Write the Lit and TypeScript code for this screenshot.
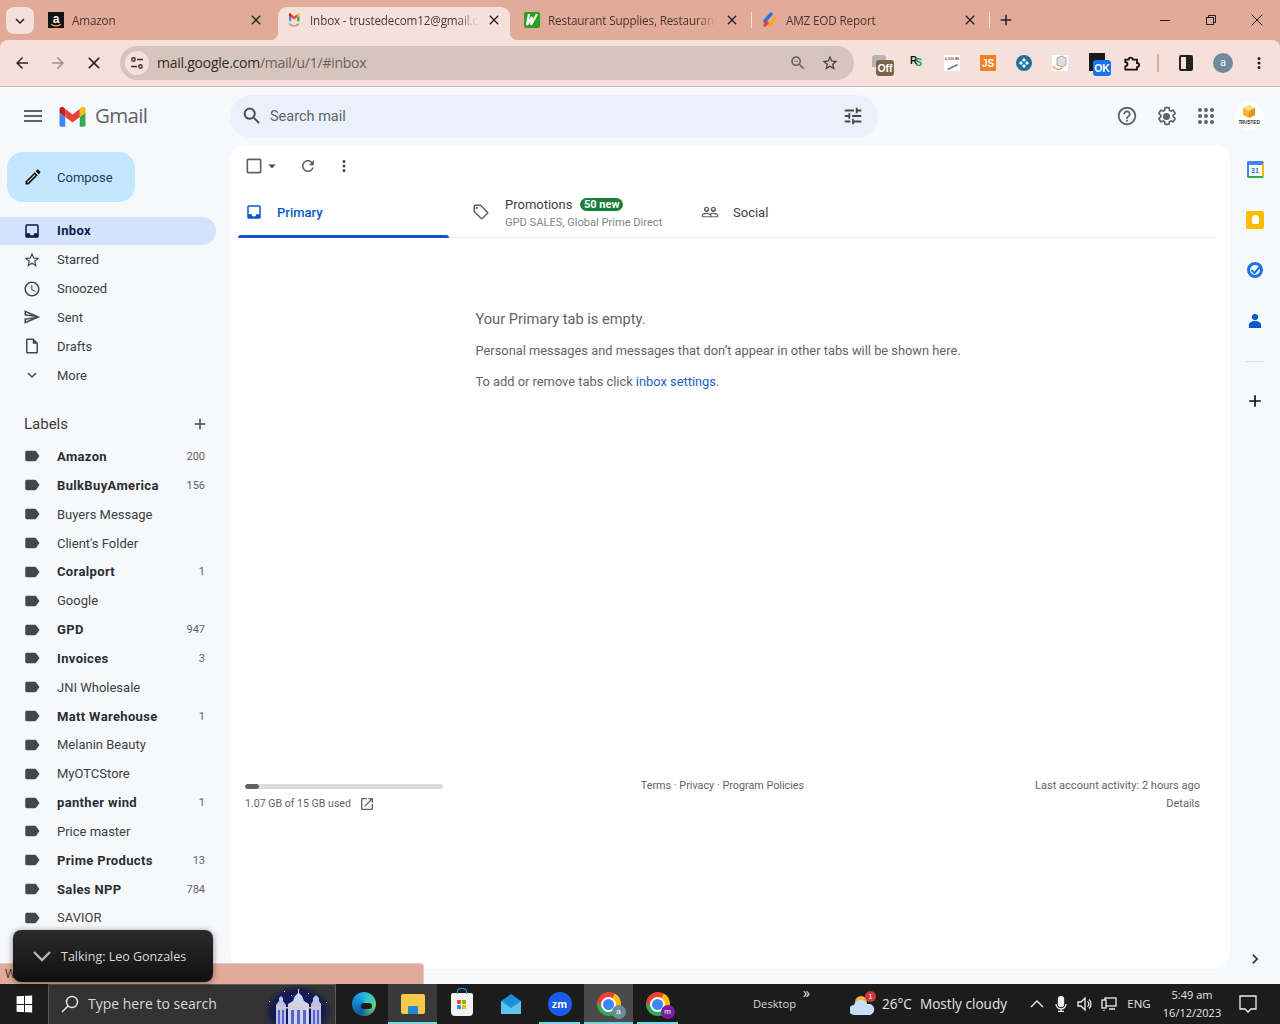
import { LitElement, html, css, svg, nothing } from 'lit';
import { customElement } from 'lit/decorators.js';

const P = {
  menu: 'M3 18h18v-2H3v2zm0-5h18v-2H3v2zm0-7v2h18V6H3z',
  edit: 'M14.06 9.02l.92.92L5.92 19H5v-.92l9.06-9.06M17.66 3c-.25 0-.51.1-.7.29l-1.83 1.83 3.75 3.75 1.83-1.83c.39-.39.39-1.02 0-1.41l-2.34-2.34c-.2-.2-.45-.29-.71-.29zm-3.6 3.19L3 17.25V21h3.75L17.81 9.94l-3.75-3.75z',
  inbox: 'M19 3H5a2 2 0 00-2 2v14a2 2 0 002 2h14a2 2 0 002-2V5a2 2 0 00-2-2zm0 12h-4a3 3 0 01-6 0H5V5h14v10z',
  star: 'M22 9.24l-7.19-.62L12 2 9.19 8.63 2 9.24l5.46 4.73L5.82 21 12 17.27 18.18 21l-1.63-7.03L22 9.24zM12 15.4l-3.76 2.27 1-4.28-3.32-2.88 4.38-.38L12 6.1l1.71 4.04 4.38.38-3.32 2.88 1 4.28L12 15.4z',
  clock: 'M11.99 2C6.47 2 2 6.48 2 12s4.47 10 9.99 10C17.52 22 22 17.52 22 12S17.52 2 11.99 2zM12 20c-4.42 0-8-3.58-8-8s3.58-8 8-8 8 3.58 8 8-3.58 8-8 8zm.5-13H11v6l5.25 3.15.75-1.23-4.5-2.67z',
  send: 'M4.01 6.03l7.51 3.22-7.52-1 .01-2.22m7.5 8.72L4 17.97v-2.22l7.51-1M2.01 3L2 10l15 2-15 2 .01 7L23 12 2.01 3z',
  draft: 'M14 2H6c-1.1 0-1.99.9-1.99 2L4 20c0 1.1.89 2 1.99 2H18c1.1 0 2-.9 2-2V8l-6-6zM6 20V4h7v5h5v11H6z',
  chevron: 'M7.41 8.59L12 13.17l4.59-4.58L18 10l-6 6-6-6z',
  label: 'M17.63 5.84C17.27 5.33 16.67 5 16 5L5 5.01C3.9 5.01 3 5.9 3 7v10c0 1.1.9 1.99 2 1.99L16 19c.67 0 1.27-.33 1.63-.84L22 12l-4.37-6.16z',
  add: 'M19 13h-6v6h-2v-6H5v-2h6V5h2v6h6v2z',
  search: 'M15.5 14h-.79l-.28-.27C15.41 12.59 16 11.11 16 9.5 16 5.91 13.09 3 9.5 3S3 5.91 3 9.5 5.91 16 9.5 16c1.61 0 3.09-.59 4.23-1.57l.27.28v.79l5 4.99L20.49 19l-4.99-5zm-6 0C7.01 14 5 11.99 5 9.5S7.01 5 9.5 5 14 7.01 14 9.5 11.99 14 9.5 14z',
  tune: 'M3 17v2h6v-2H3zM3 5v2h10V5H3zm10 16v-2h8v-2h-8v-2h-2v6h2zM7 9v2H3v2h4v2h2V9H7zm14 4v-2H11v2h10zm-6-4h2V7h4V5h-4V3h-2v6z',
  help: 'M11 18h2v-2h-2v2zm1-16C6.48 2 2 6.48 2 12s4.48 10 10 10 10-4.48 10-10S17.52 2 12 2zm0 18c-4.41 0-8-3.59-8-8s3.59-8 8-8 8 3.59 8 8-3.59 8-8 8zm0-14c-2.21 0-4 1.79-4 4h2c0-1.1.9-2 2-2s2 .9 2 2c0 2-3 1.75-3 5h2c0-2.25 3-2.5 3-5 0-2.21-1.79-4-4-4z',
  gear: 'M19.43 12.98c.04-.32.07-.64.07-.98s-.03-.66-.07-.98l2.11-1.65c.19-.15.24-.42.12-.64l-2-3.46c-.12-.22-.39-.3-.61-.22l-2.49 1c-.52-.4-1.08-.73-1.69-.98l-.38-2.65C14.46 2.18 14.25 2 14 2h-4c-.25 0-.46.18-.49.42l-.38 2.65c-.61.25-1.17.59-1.69.98l-2.49-1c-.23-.09-.49 0-.61.22l-2 3.46c-.13.22-.07.49.12.64l2.11 1.65c-.04.32-.07.65-.07.98s.03.66.07.98l-2.11 1.65c-.19.15-.24.42-.12.64l2 3.46c.12.22.39.3.61.22l2.49-1c.52.4 1.08.73 1.69.98l.38 2.65c.03.24.24.42.49.42h4c.25 0 .46-.18.49-.42l.38-2.65c.61-.25 1.17-.59 1.69-.98l2.49 1c.23.09.49 0 .61-.22l2-3.46c.12-.22.07-.49-.12-.64l-2.11-1.65z',
  refresh: 'M17.65 6.35C16.2 4.9 14.21 4 12 4c-4.42 0-7.99 3.58-7.99 8s3.57 8 7.99 8c3.73 0 6.84-2.55 7.73-6h-2.08c-.82 2.33-3.04 4-5.65 4-3.31 0-6-2.69-6-6s2.69-6 6-6c1.66 0 3.14.69 4.22 1.78L13 11h7V4l-2.35 2.35z',
  tag: 'M21.41 11.58l-9-9C12.05 2.22 11.55 2 11 2H4c-1.1 0-2 .9-2 2v7c0 .55.22 1.05.59 1.42l9 9c.36.36.86.58 1.41.58.55 0 1.05-.22 1.41-.59l7-7c.37-.36.59-.86.59-1.41 0-.55-.23-1.06-.59-1.42zM13 20.01L4 11V4h7v-.01l9 9-7 7.02zM6.5 5a1.5 1.5 0 110 3 1.5 1.5 0 010-3z',
  people: 'M16.5 13c-1.2 0-3.07.34-4.5 1-1.43-.67-3.3-1-4.5-1C5.33 13 1 14.08 1 16.25V19h22v-2.75c0-2.17-4.33-3.25-6.5-3.25zm-4 4.5h-10v-1.25c0-.54 2.56-1.75 5-1.75s5 1.21 5 1.75v1.25zm9 0H14v-1.25c0-.46-.2-.86-.52-1.22.88-.3 1.96-.53 3.02-.53 2.44 0 5 1.21 5 1.75v1.25zM7.5 12c1.93 0 3.5-1.57 3.5-3.5S9.43 5 7.5 5 4 6.57 4 8.5 5.57 12 7.5 12zm0-5.5c.83 0 1.5.67 1.5 1.5s-.67 1.5-1.5 1.5S6 8.83 6 8s.67-1.5 1.5-1.5zm9 5.5c1.93 0 3.5-1.57 3.5-3.5S18.43 5 16.5 5 13 6.57 13 8.5s1.57 3.5 3.5 3.5zm0-5.5c.83 0 1.5.67 1.5 1.5s-.67 1.5-1.5 1.5S15 8.83 15 8s.67-1.5 1.5-1.5z',
  open: 'M19 19H5V5h7V3H5c-1.11 0-2 .9-2 2v14c0 1.1.89 2 2 2h14c1.1 0 2-.9 2-2v-7h-2v7zM14 3v2h3.59l-9.83 9.83 1.41 1.41L19 6.41V10h2V3h-7z',
  back: 'M20 11H7.83l5.59-5.59L12 4l-8 8 8 8 1.41-1.41L7.83 13H20v-2z',
  forward: 'M12 4l-1.41 1.41L16.17 11H4v2h12.17l-5.58 5.59L12 20l8-8z',
  close: 'M19 6.41L17.59 5 12 10.59 6.41 5 5 6.41 10.59 12 5 17.59 6.41 19 12 13.41 17.59 19 19 17.59 13.41 12z',
  dots: 'M12 8a2 2 0 100-4 2 2 0 000 4zm0 2a2 2 0 100 4 2 2 0 000-4zm0 6a2 2 0 100 4 2 2 0 000-4z',
  caret: 'M7 10l5 5 5-5z',
  box: 'M19 5v14H5V5h14m0-2H5c-1.1 0-2 .9-2 2v14c0 1.1.9 2 2 2h14c1.1 0 2-.9 2-2V5c0-1.1-.9-2-2-2z',
  right: 'M10 6L8.59 7.41 13.17 12l-4.58 4.59L10 18l6-6z',
  zoomOut: 'M15.5 14h-.79l-.28-.27C15.41 12.59 16 11.11 16 9.5 16 5.91 13.09 3 9.5 3S3 5.91 3 9.5 5.91 16 9.5 16c1.61 0 3.09-.59 4.23-1.57l.27.28v.79l5 4.99L20.49 19l-4.99-5zm-6 0C7.01 14 5 11.99 5 9.5S7.01 5 9.5 5 14 7.01 14 9.5 11.99 14 9.5 14zM7 9h5v1H7z',
};

const icon = (d: string, cls = '') =>
  html`<svg class="ic ${cls}" viewBox="0 0 24 24"><path d=${d}></path></svg>`;

const gmailPaths = svg`
  <path fill="#4285f4" d="M3.5 41.5h8V22L0 13.5V38c0 1.9 1.6 3.5 3.5 3.5z"></path>
  <path fill="#34a853" d="M40.5 41.5h8c1.9 0 3.5-1.6 3.5-3.5V13.5L40.5 22z"></path>
  <path fill="#fbbc04" d="M40.5 6v16L52 13.5V7c0-4.3-4.9-6.8-8.4-4.2z"></path>
  <path fill="#ea4335" d="M11.5 22V6L26 16.9 40.5 6v16L26 32.9z"></path>
  <path fill="#c5221f" d="M0 7v6.5L11.5 22V6L8.4 2.8C4.9.2 0 2.7 0 7z"></path>`;

const NAV = [
  { name: 'Starred', d: P.star },
  { name: 'Snoozed', d: P.clock },
  { name: 'Sent', d: P.send },
  { name: 'Drafts', d: P.draft },
];

const LABELS: { name: string; count?: string; bold?: boolean }[] = [
  { name: 'Amazon', count: '200', bold: true },
  { name: 'BulkBuyAmerica', count: '156', bold: true },
  { name: 'Buyers Message' },
  { name: "Client's Folder" },
  { name: 'Coralport', count: '1', bold: true },
  { name: 'Google' },
  { name: 'GPD', count: '947', bold: true },
  { name: 'Invoices', count: '3', bold: true },
  { name: 'JNI Wholesale' },
  { name: 'Matt Warehouse', count: '1', bold: true },
  { name: 'Melanin Beauty' },
  { name: 'MyOTCStore' },
  { name: 'panther wind', count: '1', bold: true },
  { name: 'Price master' },
  { name: 'Prime Products', count: '13', bold: true },
  { name: 'Sales NPP', count: '784', bold: true },
  { name: 'SAVIOR' },
];

@customElement('app-root')
export class AppRoot extends LitElement {
  static styles = css`
    :host {
      display: flex;
      flex-direction: column;
      position: relative;
      width: 1280px;
      height: 1024px;
      overflow: hidden;
      font-family: Roboto, 'Liberation Sans', sans-serif;
      color: #1f1f1f;
      background: #f6f8fc;
    }
    .ic { display: block; width: 20px; height: 20px; fill: currentColor; flex: none; }
    .s14 { width: 14px; height: 14px; }
    .s16 { width: 16px; height: 16px; }
    .s18 { width: 18px; height: 18px; }
    .s22 { width: 22px; height: 22px; }
    .s24 { width: 24px; height: 24px; }

    .top { flex: none; background: #e2aa98; }

    /* browser tabs */
    .strip { height: 40px; display: flex; align-items: flex-end; position: relative; font-family: 'Open Sans', 'Noto Sans', sans-serif; }
    .tab-search { position: absolute; left: 6px; top: 7px; width: 28px; height: 27px; border-radius: 8px; background: #f6e1da; display: grid; place-items: center; color: #222; }
    .tabs { display: flex; gap: 6px; margin-left: 40px; }
    .tab { width: 232px; height: 33px; box-sizing: border-box; padding: 0 8px 7px; display: flex; align-items: center; gap: 8px; font-size: 11.7px; letter-spacing: -0.15px; color: #4a3630; position: relative; }
    .tab.on { background: #f6e1da; border-radius: 9px 9px 0 0; }
    .tab.on::before, .tab.on::after { content: ''; position: absolute; bottom: 0; width: 8px; height: 8px; }
    .tab.on::before { left: -8px; background: radial-gradient(circle at 0 0, transparent 8px, #f6e1da 8.5px); }
    .tab.on::after { right: -8px; background: radial-gradient(circle at 100% 0, transparent 8px, #f6e1da 8.5px); }
    .tab .t { flex: 1; min-width: 0; white-space: nowrap; -webkit-mask-image: linear-gradient(90deg, #000 88%, transparent); mask-image: linear-gradient(90deg, #000 88%, transparent); }
    .tab .x { color: #222; }
    .tab .sep { position: absolute; right: -4px; top: 5px; height: 16px; width: 1.5px; background: #f6e1da; }
    .fav { width: 16px; height: 16px; flex: none; display: block; }
    .newtab { margin-left: 11px; margin-bottom: 11px; color: #222; }
    .winbtns { position: absolute; right: 0; top: 0; height: 40px; display: flex; }
    .winbtn { width: 46px; display: grid; place-items: center; color: #222; }

    /* browser toolbar */
    .bar { height: 47px; box-sizing: border-box; background: #f6e1da; border-bottom: 1px solid #c9bcb6; display: flex; align-items: center; border-radius: 8px 8px 0 0; position: relative; }
    .nav-b { width: 36px; display: grid; place-items: center; color: #2b2523; }
    .nav-b.first { margin-left: 4px; }
    .nav-b.dim { color: #9c8e89; }
    .omni { margin-left: 8px; width: 734px; height: 34px; border-radius: 17px; background: #d5c5bc; display: flex; align-items: center; padding: 0 15px 0 5px; box-sizing: border-box; gap: 8px; flex: none; }
    .site { width: 24px; height: 24px; border-radius: 50%; background: #f6e1da; display: grid; place-items: center; color: #333; }
    .url { flex: 1; font: 14px/20px 'Open Sans', 'Noto Sans', sans-serif; margin-top: -1px; color: #6d5f59; letter-spacing: -0.25px; }
    .url b { font-weight: 400; color: #332a27; }
    .omni .z { color: #6b5f5a; margin-right: 6px; }
    .omni .st { color: #433a37; }
    .exts { display: flex; align-items: center; margin-left: 8px; flex: none; }
    .ext { width: 36px; height: 24px; display: grid; place-items: center; position: relative; }
    .e-off { width: 14px; height: 12px; background: #b9b3ae; border-radius: 3px 3px 0 0; position: absolute; left: 10px; top: 4px; }
    .b-off { position: absolute; left: 14px; top: 9px; width: 18px; height: 16px; border-radius: 3px; background: #7c6547; color: #fff; font: 700 10.5px/16px 'Liberation Sans', sans-serif; text-align: center; }
    .e-rs { font: 700 10px/12px 'Liberation Sans', sans-serif; color: #111; display: flex; margin-top: -2px; }
    .e-rs i { font-style: normal; color: #0f9d58; margin: 2px 0 0 -2px; }
    .e-log { width: 16px; height: 16px; background: #fff; color: #8c2c2c; font: 700 4px/8px 'Liberation Sans', sans-serif; text-align: center; overflow: hidden; position: relative; }
    .e-log::after { content: ''; position: absolute; left: 3px; bottom: 4px; width: 11px; height: 1.5px; background: #888; transform: rotate(-25deg); }
    .e-js { width: 16px; height: 16px; background: #f48120; color: #fff; font: 700 10px/17px 'Liberation Sans', sans-serif; text-align: center; border-radius: 1px; }
    .e-dark { position: absolute; left: 11px; top: 2px; width: 16px; height: 18px; background: #1b1b1b; }
    .b-ok { position: absolute; left: 15px; top: 9px; width: 18px; height: 16px; border-radius: 3px; background: #1a73e8; color: #fff; font: 700 10.5px/16px 'Liberation Sans', sans-serif; text-align: center; }
    .tb-sep { width: 2px; height: 18px; background: #e2aa98; margin: 0 8px 0 7px; flex: none; }
    .panel-i { width: 14px; height: 16px; border: 2px solid #222; border-radius: 2px; background: linear-gradient(90deg, transparent 50%, #222 50%); box-sizing: border-box; }
    .slot { width: 36px; flex: none; display: grid; place-items: center; }
    .slot.p { width: 38px; }
    .ava { width: 20px; height: 20px; border-radius: 50%; background: #6f8a9b; color: #fff; font-size: 11px; line-height: 20px; text-align: center; }

    /* gmail header */
    .gmail { flex: 1; min-height: 0; display: flex; flex-direction: column; }
    .ghead { flex: none; height: 58px; display: flex; align-items: center; }
    .burger { width: 24px; margin-left: 21px; color: #5f6368; }
    .logo { width: 27px; height: 21px; margin-left: 14px; }
    .wordmark { margin-left: 9px; margin-top: -2px; width: 135px; font: 20.500px 'Open Sans', Roboto, sans-serif; letter-spacing: -0.7px; color: #5f6368; }
    .sbox { width: 648px; height: 43px; border-radius: 22px; background: #eaf1fb; display: flex; align-items: center; padding: 0 14px 0 11px; box-sizing: border-box; color: #444746; gap: 7px; flex: none; }
    .sbox span { flex: 1; font-size: 14.500px; color: #5f6368; }
    .hicons { display: flex; margin-left: 229.500px; color: #5f6368; align-items: center; flex: none; }
    .hicons .h { width: 39.500px; display: grid; place-items: center; }
    .gear { fill: none; stroke: currentColor; stroke-width: 2; }
    .gearwrap { position: relative; width: 20px; height: 20px; }
    .gearwrap i { position: absolute; left: 6.500px; top: 6.500px; width: 7px; height: 7px; border-radius: 50%; background: currentColor; }
    .grid9 { display: grid; grid-template-columns: repeat(3, 4px); gap: 2px; }
    .grid9 i { width: 4px; height: 4px; border-radius: 50%; background: #5f6368; }
    .org { width: 28px; height: 28px; margin-left: 9px; border-radius: 50%; background: #fff; display: flex; flex-direction: column; align-items: center; overflow: hidden; }
    .org svg { width: 16px; height: 15px; margin-top: 2px; flex: none; }
    .org span { font: 700 4.500px/6px 'Liberation Sans', sans-serif; color: #222; margin-top: 1px; }

    .gbody { flex: 1; min-height: 0; display: flex; }

    /* sidebar */
    .side { width: 230px; flex: none; overflow: hidden; padding-top: 7px; box-sizing: border-box; }
    .compose { margin-left: 7px; width: 128px; height: 50px; border-radius: 16px; background: #c2e7ff; display: flex; align-items: center; padding-left: 16px; box-sizing: border-box; gap: 14px; font-size: 13px; color: #1b3a57; }
    .compose svg { color: #111; }
    .list { margin-top: 14.500px; width: 216px; }
    .list.ls { margin-top: 0; }
    .row { height: 28.850px; display: flex; align-items: center; padding: 0 11px 0 23px; box-sizing: border-box; font-size: 13px; color: #3c4043; gap: 16px; white-space: nowrap; }
    .row .ic { width: 18px; height: 18px; color: #444746; }
    .row.on { background: #d3e3fd; border-radius: 0 14px 14px 0; color: #041e49; font-weight: 700; letter-spacing: .35px; }
    .row.on .ic { color: #041e49; }
    .row .n { flex: 1; }
    .row .c { font-size: 11px; color: #5f6368; font-weight: 400; letter-spacing: 0; }
    .row.b .n { font-weight: 700; color: #2b2e31; letter-spacing: .35px; }
    .lhead { margin-top: 20.500px; margin-bottom: 4px; width: 216px; height: 28px; display: flex; align-items: center; justify-content: space-between; padding: 0 7px 0 24px; box-sizing: border-box; font-size: 15px; color: #3c4043; }
    .lhead svg { color: #444746; }

    /* main card */
    .card { flex: 1; background: #fff; border-radius: 16px; margin-bottom: 15px; display: flex; flex-direction: column; min-width: 0; }
    .tools { flex: none; height: 42px; display: flex; align-items: center; color: #5f6368; }
    .tools .cb { margin-left: 14px; color: #5f6368; }
    .tools .cr { margin-left: -1px; color: #444; }
    .tools .rf { margin-left: 18px; }
    .tools .mr { margin-left: 18px; color: #444; }
    .ctabs { flex: none; margin: 0 14px 0 8px; height: 51px; box-sizing: border-box; display: flex; border-bottom: 1px solid #e8eaed; position: relative; font-size: 13px; color: #3c4043; }
    .ctab { display: flex; align-items: center; box-sizing: border-box; }
    .ctab.p { width: 211px; padding-left: 7px; gap: 14px; color: #0b57d0; font-weight: 500; position: relative; }
    .ctab.p::after { content: ''; position: absolute; left: 0; right: 0; bottom: -1px; height: 3px; border-radius: 3px 3px 0 0; background: #0b57d0; }
    .ctab.pr { width: 252px; padding-left: 23px; gap: 15px; color: #5f6368; }
    .ctab.so { padding-left: 0; gap: 14px; color: #5f6368; }
    .ctab .ttl { color: #3c4043; }
    .pbox { display: flex; flex-direction: column; gap: 3px; margin-top: 2px; }
    .pline { display: flex; align-items: center; gap: 8px; color: #3c4043; line-height: 16px; }
    .badge { background: #188038; color: #fff; font-size: 11px; font-weight: 700; line-height: 13px; height: 13px; padding: 0 3.500px; border-radius: 7px; }
    .psub { font-size: 11.100px; line-height: 14px; color: #80868b; white-space: nowrap; }
    .empty { flex: none; margin: 71px 0 0 245.500px; color: #5f6368; font-size: 12.850px; }
    .empty h2 { margin: 0 0 13px; font: 400 14.600px/20px Roboto, sans-serif; }
    .empty p { margin: 0 0 14px; line-height: 17px; }
    .empty a { color: #1a5fc8; text-decoration: none; }
    .foot { flex: none; margin-top: auto; padding: 0 30px 156px 15px; display: grid; grid-template-columns: 1fr 1fr 1fr; color: #5f6368; font-size: 10.800px; line-height: 18px; }
    .foot .l { padding-top: 7px; }
    .foot .m { text-align: center; }
    .foot .r { text-align: right; font-size: 11.050px; }
    .meter { width: 198px; height: 5px; border-radius: 3px; background: #dadce0; margin: 0 0 6px; overflow: hidden; }
    .meter i { display: block; height: 100%; border-radius: 3px; background: #5f6368; }
    .used { display: flex; align-items: center; gap: 8px; font-size: 10.600px; }

    /* right rail */
    .rail { width: 50px; flex: none; display: flex; flex-direction: column; align-items: center; position: relative; margin-top: -1px; }
    .rail .r { height: 50.500px; display: grid; place-items: center; width: 100%; }
    .r-cal { width: 17px; height: 17px; box-sizing: border-box; border-radius: 2px; border: 2px solid #4285f4; border-top-width: 4px; border-bottom-color: #34a853; border-right-color: #fbbc04; font: 700 7px/11px 'Liberation Sans', sans-serif; color: #1a73e8; text-align: center; background: #fff; }
    .r-keep { width: 18px; height: 18px; border-radius: 2px; background: #fbbc04; display: grid; place-items: center; }
    .r-keep i { width: 7px; height: 9px; border-radius: 4px 4px 2px 2px; background: #fff; }
    .rail hr { width: 18px; border: 0; border-top: 1px solid #dadce0; margin: 15px 0 29px; }
    .rail .plus { color: #111; }
    .rail .chev { position: absolute; left: 15px; top: 805px; color: #333; }

    /* status bubble + call pill */
    .status { position: absolute; left: 0; top: 963px; width: 424px; height: 21px; box-sizing: border-box; background: #e2aa98; border-top-right-radius: 4px; border-top: 1px solid #d8cfcb; border-right: 1px solid #d8cfcb; padding-left: 5px; font: 12px/20px 'Open Sans', sans-serif; color: #40302b; }
    .pill { position: absolute; left: 13px; top: 930px; width: 200px; height: 52px; border-radius: 8px; background: linear-gradient(#2b2b2b, #101010); box-shadow: 0 1px 6px rgba(0,0,0,.45); display: flex; align-items: center; padding-left: 19px; box-sizing: border-box; gap: 9px; color: #d8d8d8; font: 12.500px 'Open Sans', sans-serif; }
    .pill svg { width: 20px; height: 12px; fill: none; stroke: #b5b5b5; stroke-width: 2.400; flex: none; }

    /* taskbar */
    .task { flex: none; height: 40px; background: #1c1c1c; display: flex; align-items: stretch; color: #e6e6e6; font-family: 'Open Sans', 'Noto Sans', sans-serif; position: relative; }
    .start { width: 48px; flex: none; display: grid; place-items: center; }
    .win { display: grid; grid-template-columns: 7.500px 7.500px; gap: 1px; transform: perspective(40px) rotateY(-14deg); }
    .win i { height: 7.500px; background: #fff; }
    .tsearch { width: 288px; flex: none; box-sizing: border-box; background: #333; border: 1px solid #5a5a5a; border-bottom: none; display: flex; align-items: center; padding: 0 0 2px 11px; gap: 8px; font-size: 14px; color: #d9d9d9; position: relative; }
    .tsearch svg.g { width: 20px; height: 20px; fill: none; stroke: #e8e8e8; stroke-width: 1.400; }
    .doodle { position: absolute; left: 215px; top: 0; width: 68px; height: 39px; }
    .apps { display: flex; margin-left: 3px; flex: none; }
    .app { width: 49px; flex: none; display: grid; place-items: center; position: relative; }
    .app.open::after { content: ''; position: absolute; left: 4px; right: 4px; bottom: 0; height: 2px; background: #76d7e6; }
    .app.act { background: #3a3a3a; }
    .app.act2 { background: #4a4a4a; }
    .app.act::after, .app.act2::after { left: 0 !important; right: 0 !important; }
    .edge { width: 24px; height: 24px; border-radius: 50%; background: conic-gradient(from 200deg, #0c59a4, #1b9de2 35%, #37c6d0 55%, #5fd36e 75%, #0c59a4); position: relative; }
    .edge::after { content: ''; position: absolute; right: 4px; top: 11px; width: 11px; height: 6px; border-radius: 6px; background: #1c1c1c; }
    .folder { width: 24px; height: 20px; background: #f7c948; border-radius: 2px; position: relative; }
    .folder::after { content: ''; position: absolute; left: 7px; bottom: 0; width: 10px; height: 8px; background: #1f88d9; border-radius: 1px 1px 0 0; }
    .store { width: 22px; height: 23px; background: #f2f2f2; border-radius: 2px 2px 4px 4px; display: grid; place-items: center; position: relative; }
    .store::before { content: ''; position: absolute; top: -5px; left: 6px; width: 10px; height: 6px; border: 1.500px solid #1aa3e8; border-bottom: none; border-radius: 4px 4px 0 0; box-sizing: border-box; }
    .msq { display: grid; grid-template-columns: 4px 4px; gap: 1px; }
    .msq i { height: 4px; }
    .mailic { width: 24px; height: 24px; }
    .zm { width: 24px; height: 24px; border-radius: 50%; background: #1b5ce8; color: #fff; font: 700 11px/24px 'Liberation Sans', sans-serif; text-align: center; }
    .chrome { width: 24px; height: 24px; border-radius: 50%; background: conic-gradient(from 30deg, #fbbc04 0 120deg, #34a853 120deg 240deg, #ea4335 240deg 360deg); display: grid; place-items: center; position: relative; }
    .chrome::before { content: ''; width: 11px; height: 11px; border-radius: 50%; background: #4285f4; border: 2px solid #fff; box-sizing: content-box; }
    .chrome b { position: absolute; right: -5px; bottom: -3px; width: 14px; height: 14px; border-radius: 50%; font: 400 8px/14px 'Liberation Sans', sans-serif; text-align: center; color: #fff; }
    .tray { flex: 1; min-width: 0; display: flex; align-items: center; position: relative; font-size: 13.600px; white-space: nowrap; padding-bottom: 1px; box-sizing: border-box; }
    .dsk { margin-left: 71px; font-size: 11.200px; color: #d8d8d8; width: 97px; flex: none; }
    .more { position: absolute; left: 121px; top: 0; font-size: 14px; line-height: 18px; color: #eee; }
    .wx { width: 26px; height: 26px; margin-right: 6px; position: relative; flex: none; }
    .wx i { position: absolute; right: 0; top: 0; width: 11px; height: 11px; border-radius: 50%; background: #d13438; color: #fff; font: 400 8px/11px 'Liberation Sans', sans-serif; text-align: center; }
    .wx-t { width: 143px; flex: none; display: flex; gap: 8px; }
    .ti { width: 24px; flex: none; display: grid; place-items: center; color: #eee; }
    .ti svg { width: 16px; height: 16px; fill: none; stroke: currentColor; stroke-width: 1.300; }
    .eng { width: 36px; flex: none; text-align: center; font-size: 11.500px; }
    .clock { width: 70px; flex: none; text-align: center; font-size: 11px; line-height: 18px; }
    .note { width: 20px; margin-left: 11px; flex: none; }
    .note svg { display: block; width: 20px; height: 20px; fill: none; stroke: #eee; stroke-width: 1.300; }
  `;

  private renderSidebar() {
    return html`<aside class="side">
      <div class="compose">${icon(P.edit)}<span>Compose</span></div>
      <div class="list">
        <div class="row on">${icon(P.inbox)}<span class="n">Inbox</span></div>
        ${NAV.map((n) => html`<div class="row">${icon(n.d)}<span class="n">${n.name}</span></div>`)}
        <div class="row">${icon(P.chevron)}<span class="n">More</span></div>
      </div>
      <div class="lhead"><span>Labels</span>${icon(P.add, 's18')}</div>
      <div class="list ls">
        ${LABELS.map(
          (l) => html`<div class="row ${l.bold ? 'b' : ''}">
            ${icon(P.label)}<span class="n">${l.name}</span>
            ${l.count ? html`<span class="c">${l.count}</span>` : nothing}
          </div>`,
        )}
      </div>
    </aside>`;
  }

  private renderCard() {
    return html`<main class="card">
      <div class="tools">
        ${icon(P.box, 'cb')}${icon(P.caret, 'cr s18')}${icon(P.refresh, 'rf s18')}${icon(P.dots, 'mr s18')}
      </div>
      <div class="ctabs">
        <div class="ctab p">${icon(P.inbox, 's18')}<span>Primary</span></div>
        <div class="ctab pr">
          ${icon(P.tag, 's18')}
          <div class="pbox">
            <div class="pline"><span>Promotions</span><span class="badge">50 new</span></div>
            <div class="psub">GPD SALES, Global Prime Direct</div>
          </div>
        </div>
        <div class="ctab so">${icon(P.people, 's18')}<span class="ttl">Social</span></div>
      </div>
      <div class="empty">
        <h2>Your Primary tab is empty.</h2>
        <p>Personal messages and messages that don’t appear in other tabs will be shown here.</p>
        <p>To add or remove tabs click <a href="#">inbox settings</a>.</p>
      </div>
      <div class="foot">
        <div class="l">
          <div class="meter"><i style="width:7%"></i></div>
          <div class="used"><span>1.07 GB of 15 GB used</span>${icon(P.open, 's16')}</div>
        </div>
        <div class="m">Terms · Privacy · Program Policies</div>
        <div class="r">Last account activity: 2 hours ago<br />Details</div>
      </div>
    </main>`;
  }

  private renderBrowser() {
    return html`<div class="top">
      <div class="strip">
        <div class="tab-search">${icon(P.chevron, 's18')}</div>
        <div class="tabs">
          <div class="tab">
            <svg class="fav" viewBox="0 0 16 16"><rect width="16" height="16" fill="#111"></rect><text x="8" y="10.500" text-anchor="middle" font-family="Liberation Sans" font-weight="700" font-size="12" fill="#fff">a</text><path d="M3 12c3 2.500 7 2.500 10 0" fill="none" stroke="#f90" stroke-width="1.500"></path></svg>
            <span class="t">Amazon</span>${icon(P.close, 's16 x')}
          </div>
          <div class="tab on">
            <svg class="fav" viewBox="0 0 16 16">
              <g transform="translate(3 1) scale(.2)">${gmailPaths}</g>
              <path d="M3 11.500c3 3.500 7 3.500 10 0" fill="none" stroke="#b98a7a" stroke-width="1.400"></path>
            </svg>
            <span class="t">Inbox - trustedecom12@gmail.c</span>${icon(P.close, 's16 x')}
          </div>
          <div class="tab">
            <svg class="fav" viewBox="0 0 16 16"><rect width="16" height="16" rx="2" fill="#2e9e1f"></rect><path d="M5 2L3 13l5-8-1 8 6-11" fill="none" stroke="#fff" stroke-width="2.200"></path></svg>
            <span class="t">Restaurant Supplies, Restaurant</span>${icon(P.close, 's16 x')}<i class="sep"></i>
          </div>
          <div class="tab">
            <svg class="fav" viewBox="0 0 16 16"><path d="M3 9l6-7" stroke="#1a73e8" stroke-width="3.400" stroke-linecap="round"></path><path d="M7 13l6-7" stroke="#f9a825" stroke-width="3.400" stroke-linecap="round"></path><path d="M3 13l2-2" stroke="#ea4335" stroke-width="3.400" stroke-linecap="round"></path></svg>
            <span class="t">AMZ EOD Report</span>${icon(P.close, 's16 x')}<i class="sep"></i>
          </div>
        </div>
        ${icon(P.add, 'newtab s18')}
        <div class="winbtns">
          <div class="winbtn"><svg width="10" height="10" viewBox="0 0 10 10"><path d="M0 5.500h10" stroke="#222"></path></svg></div>
          <div class="winbtn"><svg width="10" height="10" viewBox="0 0 10 10" fill="none" stroke="#222"><rect x=".5" y="2.500" width="7" height="7"></rect><path d="M2.500 2.500v-2h7v7h-2"></path></svg></div>
          <div class="winbtn"><svg width="12" height="12" viewBox="0 0 12 12"><path d="M.5.5l11 11m0-11l-11 11" stroke="#222"></path></svg></div>
        </div>
      </div>
      <div class="bar">
        <div class="nav-b first">${icon(P.back, 's18')}</div>
        <div class="nav-b dim">${icon(P.forward, 's18')}</div>
        <div class="nav-b">${icon(P.close)}</div>
        <div class="omni">
          <div class="site">
            <svg width="14" height="14" viewBox="0 0 14 14" fill="none" stroke="#333" stroke-width="1.400"><circle cx="3.500" cy="3.500" r="1.700"></circle><circle cx="10.500" cy="10.500" r="1.700"></circle><path d="M7 3.500h6M1 10.500h6"></path></svg>
          </div>
          <div class="url"><b>mail.google.com</b>/mail/u/1/#inbox</div>
          ${icon(P.zoomOut, 'z s18')}${icon(P.star, 'st s18')}
        </div>
        <div class="exts">
          <div class="ext"><i class="e-off"></i><span class="b-off">Off</span></div>
          <div class="ext"><span class="e-rs">R<i>S</i></span></div>
          <div class="ext"><span class="e-log">LOG IN</span></div>
          <div class="ext"><span class="e-js">JS</span></div>
          <div class="ext">
            <svg width="16" height="16" viewBox="0 0 16 16"><circle cx="8" cy="8" r="8" fill="#1f6f9f"></circle><path d="M8 3l2 2-2 2-2-2zM8 9l2 2-2 2-2-2zM3 8l2-2 2 2-2 2zM13 8l-2-2-2 2 2 2z" fill="#fff"></path></svg>
          </div>
          <div class="ext">
            <svg width="16" height="16" viewBox="0 0 16 16"><rect width="16" height="16" fill="#fff"></rect><path d="M5 3l5-2 4 2v7l-4 2-5-2z" fill="#ddd" stroke="#888" stroke-width=".7"></path><path d="M1 11c2 4 7 4 9 2" fill="none" stroke="#f4a340" stroke-width="1.500"></path></svg>
          </div>
          <div class="ext"><i class="e-dark"></i><span class="b-ok">OK</span></div>
          <div class="ext">
            <svg width="20" height="20" viewBox="0 0 24 24" fill="none" stroke="#111" stroke-width="2.200"><path d="M4 8h4a2.500 2.500 0 015 0h5v4a2.500 2.500 0 010 5v3H4v-4a2.500 2.500 0 000-5z"></path></svg>
          </div>
        </div>
        <i class="tb-sep"></i>
        <div class="slot p"><div class="panel-i"></div></div>
        <div class="slot"><div class="ava">a</div></div>
        <div class="slot">${icon(P.dots, 's18')}</div>
      </div>
    </div>`;
  }

  private renderTaskbar() {
    return html`<footer class="task">
      <div class="start"><div class="win"><i></i><i></i><i></i><i></i></div></div>
      <div class="tsearch">
        <svg class="g" viewBox="0 0 20 20"><circle cx="12" cy="8" r="5.500"></circle><path d="M8 12l-6 6"></path></svg>
        <span>Type here to search</span>
        <svg class="doodle" viewBox="0 0 68 39">
          <defs><radialGradient id="gl"><stop offset="0" stop-color="#101a78"></stop><stop offset=".75" stop-color="#141a4d"></stop><stop offset="1" stop-color="#333"></stop></radialGradient></defs>
          <ellipse cx="34" cy="26" rx="34" ry="26" fill="url(#gl)"></ellipse>
          <path d="M12 39V20l3-4v-3l2-2 2 2v3l3 4v19z" fill="#b9c2ee"></path>
          <path d="M24 39V19l5-3 2-5 3-3V4h1v4l3 3 2 5 5 3v20z" fill="#cdd4f5"></path>
          <path d="M47 39V19l2-3v-3l3-3 3 3v3l2 3v20z" fill="#b9c2ee"></path>
          <path d="M14 25h2v14h-2zM18 25h2v14h-2zM27 25h3v14h-3zM33 25h3v14h-3zM39 25h3v14h-3zM49 25h2v14h-2zM53 25h2v14h-2z" fill="#5a64c4"></path>
          <path d="M12 22h45v1.500H12z" fill="#e8c9a8"></path>
          <path d="M5 16h1v1H5zM20 6h1v1h-1zM44 8h1v1h-1zM62 17h1v1h-1zM27 10h1v1h-1z" fill="#fff"></path>
        </svg>
      </div>
      <div class="apps">
        <div class="app"><div class="edge"></div></div>
        <div class="app open act"><div class="folder"></div></div>
        <div class="app"><div class="store"><div class="msq"><i style="background:#f25022"></i><i style="background:#7fba00"></i><i style="background:#00a4ef"></i><i style="background:#ffb900"></i></div></div></div>
        <div class="app">
          <svg class="mailic" viewBox="0 0 24 24"><path d="M2 9l10-7 10 7v13H2z" fill="#1c8fd8"></path><path d="M2 9l10 7 10-7v13H2z" fill="#5cc3ee"></path></svg>
        </div>
        <div class="app open"><div class="zm">zm</div></div>
        <div class="app open act2"><div class="chrome"><b style="background:#6f8a9b">a</b></div></div>
        <div class="app open"><div class="chrome"><b style="background:#7b1fa2">m</b></div></div>
      </div>
      <div class="tray">
        <span class="dsk">Desktop</span>
        <span class="more">»</span>
        <div class="wx">
          <svg viewBox="0 0 26 26" width="26" height="26"><circle cx="11" cy="11" r="6" fill="#f6b73c"></circle><path d="M4 24a5 5 0 010-10 7 7 0 0113-1 5.500 5.500 0 013 11z" fill="#c7dcf5"></path></svg>
          <i>1</i>
        </div>
        <div class="wx-t"><span>26°C</span><span>Mostly cloudy</span></div>
        <div class="ti"><svg viewBox="0 0 16 16"><path d="M2 11l6-6 6 6"></path></svg></div>
        <div class="ti"><svg viewBox="0 0 16 16"><rect x="5.500" y="0.500" width="5" height="10" rx="2.500" fill="#eee"></rect><path d="M3 8a5 5 0 0010 0M8 13v3M5 15.500h6"></path></svg></div>
        <div class="ti"><svg viewBox="0 0 16 16"><path d="M1 6h3l4-4v12l-4-4H1zM10.500 5.500a3 3 0 010 5M12 3.500a6 6 0 010 9"></path></svg></div>
        <div class="ti"><svg viewBox="0 0 16 16"><rect x="4" y="2" width="11" height="8"></rect><rect x="1" y="4" width="4" height="8" fill="#1c1c1c"></rect><path d="M8 13h6M3 14v1"></path></svg></div>
        <span class="eng">ENG</span>
        <div class="clock">5:49 am<br />16/12/2023</div>
        <div class="note"><svg viewBox="0 0 20 20"><path d="M2 2h16v13h-5l-3 3-3-3H2z"></path></svg></div>
      </div>
    </footer>`;
  }

  render() {
    return html`
      ${this.renderBrowser()}
      <div class="gmail">
        <header class="ghead">
          <div class="burger">${icon(P.menu, 's24')}</div>
          <svg class="logo" viewBox="0 0 52 42">${gmailPaths}</svg>
          <div class="wordmark">Gmail</div>
          <div class="sbox">${icon(P.search, 's22')}<span>Search mail</span>${icon(P.tune, 's22')}</div>
          <div class="hicons">
            <div class="h">${icon(P.help, 's22')}</div>
            <div class="h"><div class="gearwrap">${icon(P.gear, 'gear')}<i></i></div></div>
            <div class="h"><div class="grid9">${Array.from({ length: 9 }, () => html`<i></i>`)}</div></div>
            <div class="org">
              <svg viewBox="0 0 16 15"><path d="M8 1l6 3v7l-6 3-6-3V4z" fill="#f2b632"></path><path d="M2 4l6 3 6-3-6-3z" fill="#f9e08a"></path><path d="M8 7v7l6-3V4z" fill="#e0951b"></path></svg>
              <span>TRUSTED</span>
            </div>
          </div>
        </header>
        <div class="gbody">
          ${this.renderSidebar()}
          ${this.renderCard()}
          <nav class="rail">
            <div class="r"><div class="r-cal">31</div></div>
            <div class="r"><div class="r-keep"><i></i></div></div>
            <div class="r">
              <svg width="18" height="18" viewBox="0 0 18 18"><circle cx="9" cy="9" r="6.500" fill="none" stroke="#1a73e8" stroke-width="3"></circle><path d="M5.500 9l3 3 6-7" fill="none" stroke="#1a73e8" stroke-width="2"></path></svg>
            </div>
            <div class="r">
              <svg width="14" height="16" viewBox="0 0 16 18"><circle cx="8" cy="4.500" r="3.500" fill="#0b57d0"></circle><path d="M1 17v-3c0-3 3-5 7-5s7 2 7 5v3z" fill="#0b57d0"></path></svg>
            </div>
            <hr />
            ${icon(P.add, 'plus')}
            ${icon(P.right, 'chev')}
          </nav>
        </div>
      </div>
      ${this.renderTaskbar()}
      <div class="status">Waiting for mail.google.com...</div>
      <div class="pill">
        <svg viewBox="0 0 20 12"><path d="M2 2l8 8 8-8"></path></svg>
        <span>Talking: Leo Gonzales</span>
      </div>
    `;
  }
}
